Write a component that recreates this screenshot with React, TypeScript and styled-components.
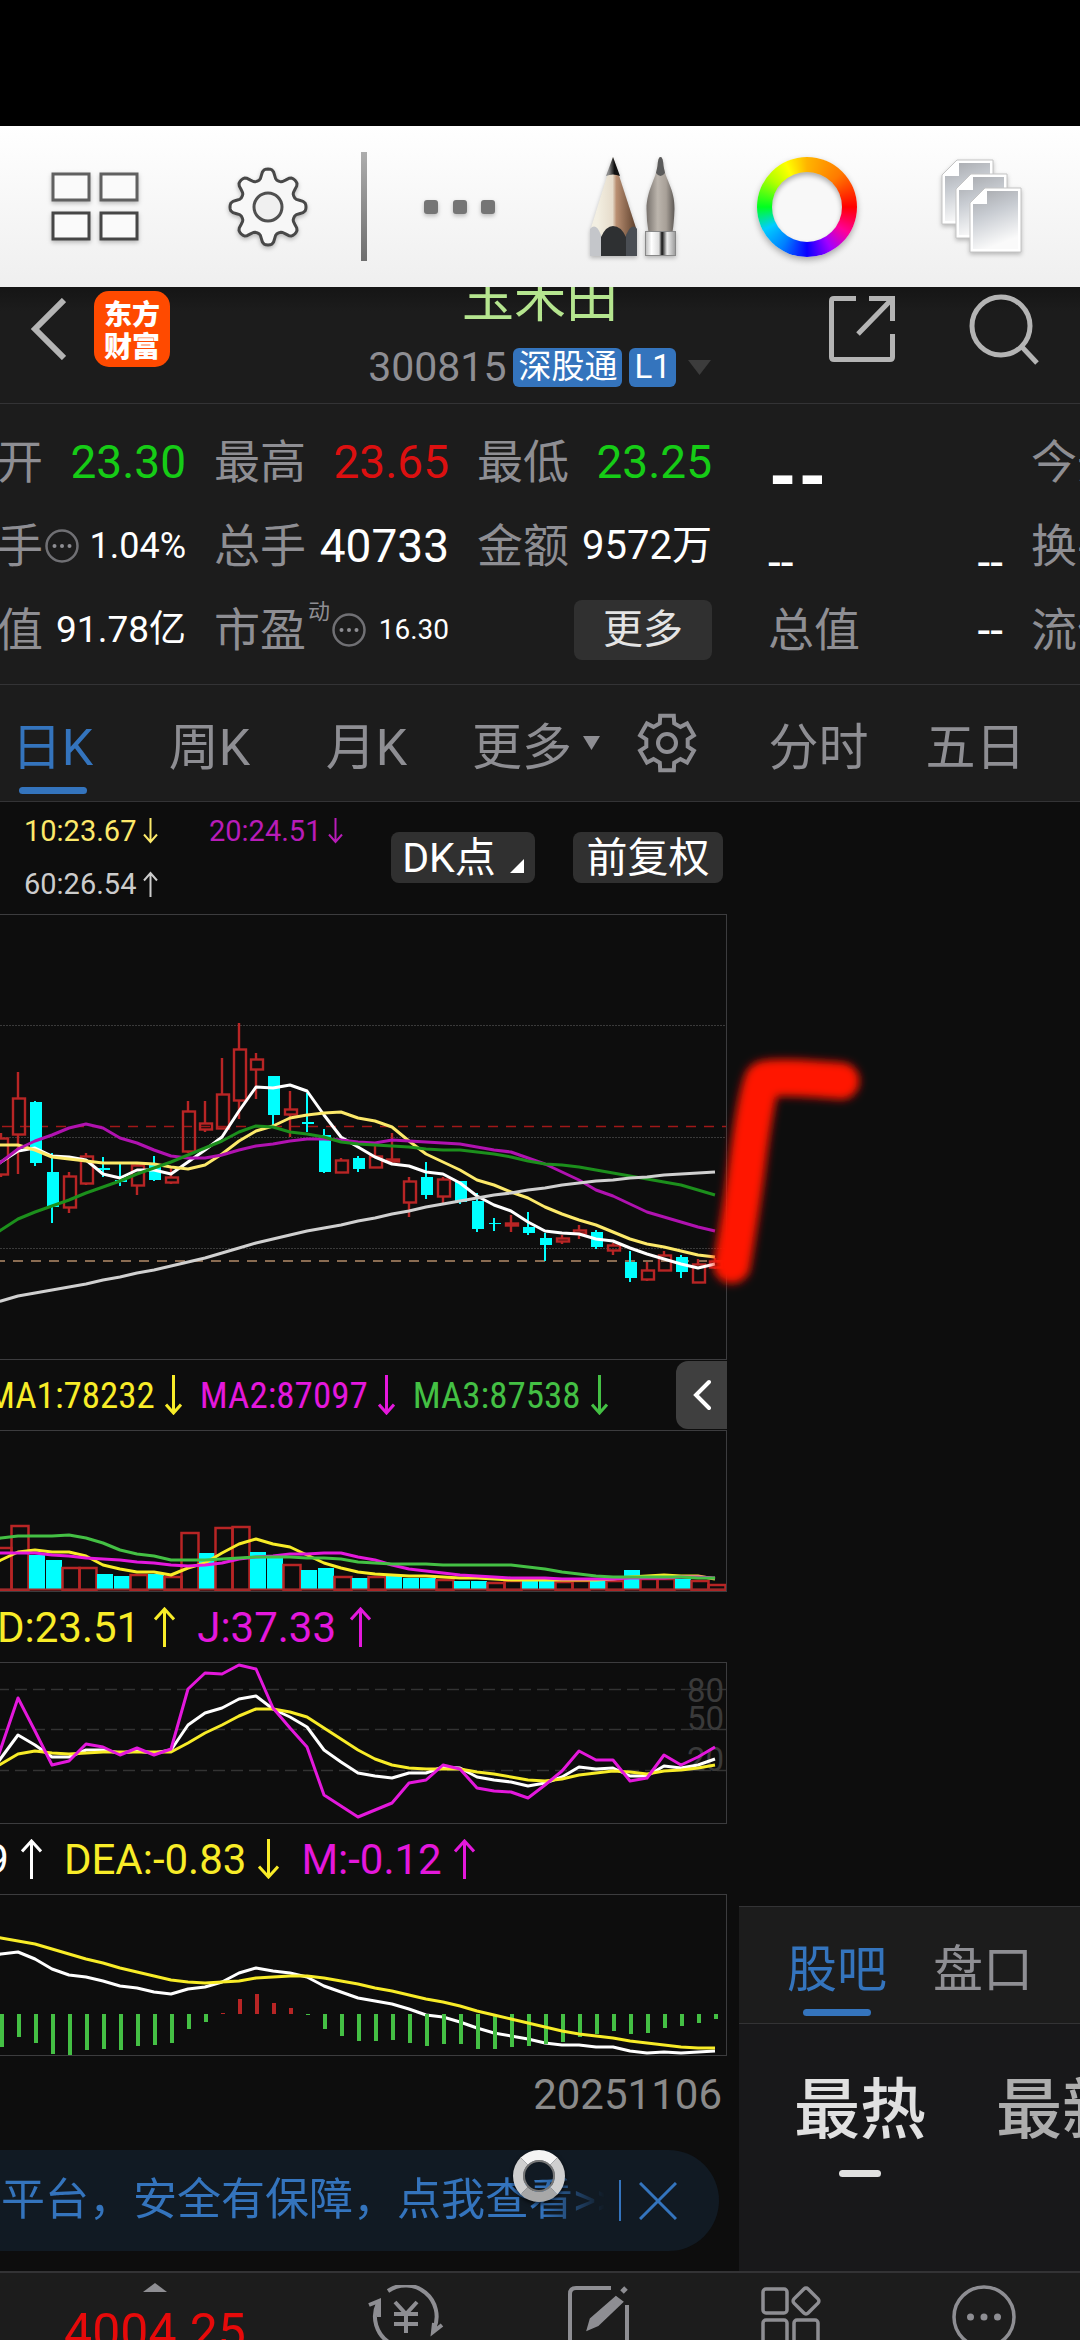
import React from "react";
import styled, { createGlobalStyle } from "styled-components";

/* ---------- palette ---------- */
const c = {
  panel: "#1c1c1c",
  page: "#0d0d0d",
  line: "#333335",
  grey: "#8e8e93",
  blue: "#3474bd",
  up: "#b82525",
  down: "#00ffff",
  yellow: "#f8ec28",
  magenta: "#e418dc",
  green: "#44c044",
};

const Global = createGlobalStyle`
  html, body { margin: 0; background: #000; }
  body { font-family: Roboto, "Noto Sans CJK SC", sans-serif; color: #fff; overflow: hidden; }
  *, *::before, *::after { box-sizing: border-box; }
  button { font: inherit; color: inherit; background: none; border: 0; padding: 0; margin: 0; }
  svg { display: block; flex: none; }
`;

/* ---------- shell ---------- */
const Shell = styled.div`
  position: relative;
  display: flex;
  flex-direction: column;
  height: 100vh;
  overflow: hidden;
  background: ${c.page};
`;
const StatusBar = styled.div`
  flex: none;
  height: 126px;
  background: #000;
`;

/* ---------- drawing toolbar ---------- */
const Toolbar = styled.div`
  flex: none;
  display: grid;
  grid-template-columns: 1fr 1fr 18px 1fr 1fr 1fr 1fr;
  align-items: center;
  justify-items: center;
  height: 161px;
  padding: 0 12px 0 8px;
  background: linear-gradient(#ffffff, #efefef);
`;
const ToolButton = styled.button`
  display: flex;
  align-items: center;
  justify-content: center;
  width: 120px;
  height: 120px;
`;
const ToolDivider = styled.span`
  width: 6px;
  height: 109px;
  background: linear-gradient(#adadad, #6e6e6e);
`;
const ColorRing = styled.span`
  display: grid;
  place-items: center;
  width: 100px;
  height: 100px;
  border-radius: 50%;
  box-shadow: 0 3px 6px rgba(0, 0, 0, 0.3);
  background: conic-gradient(
    #ffb400, #ff7a00 45deg, #ff0000 90deg, #ff0096 122deg, #a000ff 150deg, #0a00ff 180deg,
    #0080ff 212deg, #00ccff 242deg, #00ff20 270deg, #b4ff00 308deg, #ffff00 334deg, #ffb400 360deg
  );
`;
const RingHole = styled.span`
  width: 70px;
  height: 70px;
  border-radius: 50%;
  background: #f8f8f8;
  box-shadow: inset 0 3px 5px rgba(0, 0, 0, 0.3);
`;

/* ---------- header ---------- */
const Header = styled.header`
  flex: none;
  display: grid;
  grid-template-columns: 1fr auto 1fr;
  align-items: end;
  align-content: end;
  height: 117px;
  overflow: hidden;
  border-bottom: 1px solid ${c.line};
  background: linear-gradient(#151515, ${c.panel} 24px);
`;
const HeaderSide = styled.div<{ $end?: boolean }>`
  display: flex;
  align-items: center;
  justify-content: ${(p) => (p.$end ? "flex-end" : "flex-start")};
  gap: ${(p) => (p.$end ? 74 : 28)}px;
  height: 76px;
  margin-bottom: 36px;
  padding: ${(p) => (p.$end ? "0 40px 0 0" : "0 0 0 30px")};
`;
const BrandLogo = styled.div`
  display: flex;
  flex-direction: column;
  align-items: center;
  justify-content: center;
  width: 76px;
  height: 76px;
  border-radius: 15px;
  background: #ff4a00;
  font: 900 28px/32px "Noto Sans CJK SC", sans-serif;
`;
const TitleBlock = styled.div`
  display: flex;
  flex-direction: column;
  align-items: center;
  padding-bottom: 16px;
`;
const StockName = styled.h1`
  margin: 0 0 18px;
  font: 400 52px/68px "Noto Sans CJK SC", sans-serif;
  color: #b5e58f;
`;
const CodeLine = styled.div`
  display: flex;
  align-items: center;
  gap: 7px;
  height: 40px;
  font-size: 41px;
  color: ${c.grey};
`;
const Badge = styled.span`
  height: 39px;
  padding: 0 5px;
  border-radius: 6px;
  background: ${c.blue};
  color: #fff;
  font-size: 33px;
  line-height: 38px;
`;
const Caret = styled.svg`
  margin-left: 4px;
`;

/* ---------- swipe pager ---------- */
const Viewport = styled.main`
  flex: none;
  overflow: hidden;
`;
const Track = styled.div`
  display: flex;
  width: 100%;
  margin-left: -340px;
`;
const Page = styled.section`
  flex: 0 0 100%;
  display: flex;
  flex-direction: column;
  min-width: 0;
  border-bottom: 1px solid ${c.line};
`;

/* ---------- quote ---------- */
const Quote = styled.div`
  display: grid;
  grid-template-columns: repeat(4, 1fr);
  grid-auto-rows: 84px;
  column-gap: 28px;
  padding: 16px 28px 12px;
  background: ${c.panel};
  border-bottom: 1px solid ${c.line};
`;
const Cell = styled.div<{ $low?: boolean }>`
  display: flex;
  align-items: center;
  justify-content: space-between;
  min-width: 0;
  white-space: nowrap;
  line-height: 84px;
  padding-top: ${(p) => (p.$low ? 32 : 0)}px;
`;
const Label = styled.span`
  display: flex;
  align-items: center;
  gap: 2px;
  font-size: 46px;
  color: ${c.grey};
`;
const Sup = styled.sup`
  align-self: flex-start;
  height: 48px;
  font-size: 22px;
  line-height: 48px;
`;
const Value = styled.span<{ $size?: number; $tone?: string }>`
  font-size: ${(p) => p.$size ?? 46}px;
  color: ${(p) => p.$tone ?? "#fff"};
`;
const BigPrice = styled.span`
  font-size: 66px;
  font-weight: 900;
`;
const MoreButton = styled.button`
  width: 138px;
  height: 60px;
  margin-left: auto;
  border-radius: 8px;
  background: #303030;
  color: #e4e4e4;
  font-size: 40px;
  line-height: 60px;
`;

/* ---------- period tabs ---------- */
const Tabs = styled.nav`
  display: flex;
  height: 117px;
  background: ${c.panel};
  border-bottom: 1px solid ${c.line};
`;
const Tab = styled.button<{ $on?: boolean; $w?: number }>`
  flex: none;
  display: grid;
  grid-template-rows: 88px 7px;
  align-content: start;
  justify-content: center;
  justify-items: center;
  align-items: center;
  width: ${(p) => p.$w ?? 157}px;
  padding-top: 14px;
  font-size: 50px;
  white-space: nowrap;
  color: ${(p) => (p.$on ? c.blue : c.grey)};
  &::after {
    content: "";
    width: 68px;
    height: 7px;
    border-radius: 4px;
    background: ${(p) => (p.$on ? c.blue : "transparent")};
  }
`;
const MoreLabel = styled.span`
  display: flex;
  align-items: center;
  gap: 11px;
`;
const GearTab = styled(Tab)`
  margin-left: 10px;
`;

/* ---------- chart column ---------- */
const MaStrip = styled.div`
  display: flex;
  justify-content: space-between;
  height: 112px;
  padding: 2px 17px 0 364px;
`;
const MaGrid = styled.div`
  display: grid;
  grid-template-columns: 185px 180px;
  grid-auto-rows: 53px;
`;
const Indicator = styled.span<{ $tone: string; $size?: number; $gap?: number }>`
  display: flex;
  align-items: center;
  gap: ${(p) => p.$gap ?? 7}px;
  white-space: nowrap;
  font-size: ${(p) => p.$size ?? 29}px;
  color: ${(p) => p.$tone};
`;
const CondensedIndicator = styled(Indicator)`
  font-family: "Roboto Condensed", Roboto, sans-serif;
`;
const ChipRow = styled.div`
  display: flex;
  gap: 38px;
  padding-top: 28px;
`;
const Chip = styled.button<{ $w: number }>`
  display: flex;
  align-items: center;
  justify-content: center;
  gap: 14px;
  width: ${(p) => p.$w}px;
  height: 51px;
  border-radius: 8px;
  background: #303030;
  font-size: 41px;
  line-height: 50px;
`;
const Frame = styled.div`
  display: flex;
  justify-content: flex-end;
  margin-right: 13px;
  border: 1px solid #3c3c3e;
  overflow: hidden;
`;
const Legend = styled.div<{ $left: number; $gap: number }>`
  display: flex;
  align-items: center;
  gap: ${(p) => p.$gap}px;
  height: 70px;
  padding: 0 13px 0 ${(p) => p.$left}px;
`;
const CollapseButton = styled.button`
  display: grid;
  place-items: center;
  width: 51px;
  height: 68px;
  margin-left: auto;
  border-radius: 12px 0 0 12px;
  background: #3f3f3f;
`;
const DateRow = styled.div`
  height: 94px;
  padding-right: 18px;
  text-align: right;
  font-size: 42px;
  line-height: 78px;
  color: #8a8a8a;
`;
const Banner = styled.div`
  display: flex;
  align-items: center;
  height: 101px;
  margin: 0 21px 20px 0;
  padding-left: 341px;
  border-radius: 51px;
  background: #111a23;
  color: ${c.blue};
`;
const BannerLink = styled.a`
  flex: 1;
  overflow: hidden;
  white-space: nowrap;
  font-size: 44px;
  line-height: 101px;
  color: inherit;
  text-decoration: none;
  mask-image: linear-gradient(90deg, #000 540px, transparent 604px);
`;
const BannerClose = styled.button`
  display: flex;
  align-items: center;
  gap: 18px;
  margin-right: 42px;
  &::before {
    content: "";
    width: 2px;
    height: 41px;
    background: ${c.blue};
  }
`;

/* ---------- forum panel ---------- */
const Forum = styled.div`
  display: flex;
  flex-direction: column;
  height: 365px;
  margin: auto 0 0 -1px;
  border-top: 1px solid ${c.line};
  background: #18181a;
`;
const ForumTabs = styled.div`
  display: flex;
  gap: 46px;
  height: 117px;
  padding-left: 48px;
  background: ${c.panel};
  border-bottom: 1px solid ${c.line};
`;
const ForumTab = styled(Tab)`
  width: 100px;
`;
const SortTabs = styled.div`
  display: flex;
  gap: 70px;
  padding: 39px 0 0 55px;
`;
const SortTab = styled.button<{ $on?: boolean }>`
  flex: none;
  display: flex;
  flex-direction: column;
  align-items: center;
  font-size: 66px;
  font-weight: 500;
  line-height: 96px;
  color: ${(p) => (p.$on ? "#e0e0e0" : "#adadad")};
  &::after {
    content: "";
    width: 42px;
    height: 7px;
    margin-top: 11px;
    border-radius: 4px;
    background: ${(p) => (p.$on ? "#e0e0e0" : "transparent")};
  }
`;

/* ---------- bottom bar ---------- */
const BottomBar = styled.nav`
  flex: none;
  display: grid;
  grid-template-columns: 310px repeat(4, 1fr);
  justify-items: center;
  height: 130px;
  padding-top: 10px;
  border-top: 1px solid ${c.line};
  background: ${c.panel};
  color: ${c.grey};
`;
const IndexButton = styled.button`
  display: flex;
  flex-direction: column;
  align-items: center;
  font-size: 50px;
  line-height: 60px;
  color: #e60a0a;
  gap: 10px;
`;
const NavButton = styled.button`
  display: flex;
  align-items: flex-start;
  padding-top: 2px;
`;

/* ---------- things lying over the page ---------- */
const BrushStroke = styled.svg`
  position: absolute;
  left: 690px;
  top: 1030px;
  pointer-events: none;
`;
const Puck = styled.div`
  position: absolute;
  left: 513px;
  top: 2150px;
  width: 52px;
  height: 52px;
  border-radius: 50%;
  border: 10px solid #cfcfcf;
  border-top-color: #f4f4f4;
  border-bottom-color: #a8a8a8;
  box-shadow: inset 0 0 0 2px #777, 0 2px 4px rgba(0, 0, 0, 0.7);
`;

/* ---------- data ---------- */
const step = (i: number) => 1 + 17 * i;

// rising flag, high, body top, body bottom, low
const candles: number[][] = [
  [1,1133,1138,1174,1177],[1,1072,1098,1134,1174],[0,1101,1102,1163,1166],[0,1153,1172,1207,1223],
  [1,1172,1176,1207,1213],[1,1153,1156,1183,1185],[0,1157,1168,1170,1177],[0,1163,1180,1182,1186],
  [1,1163,1165,1185,1195],[0,1156,1165,1180,1181],[1,1168,1177,1182,1184],[1,1101,1111,1151,1153],
  [1,1101,1123,1129,1132],[1,1058,1094,1128,1129],[1,1023,1049,1100,1119],[1,1053,1059,1069,1099],
  [0,1076,1076,1115,1125],[1,1091,1109,1114,1137],[0,1093,1122,1124,1132],[0,1129,1135,1172,1173],
  [1,1158,1160,1172,1173],[0,1156,1158,1169,1172],[1,1146,1156,1167,1167],[1,1133,1159,1161,1164],
  [1,1177,1181,1202,1217],[0,1162,1177,1195,1199],[1,1177,1179,1196,1203],[0,1181,1181,1202,1204],
  [0,1193,1201,1229,1232],[0,1218,1223,1224,1231],[1,1215,1223,1225,1232],[0,1212,1227,1233,1235],
  [0,1233,1238,1245,1261],[1,1235,1238,1241,1244],[1,1225,1230,1233,1239],[0,1230,1232,1247,1249],
  [1,1243,1245,1250,1255],[0,1251,1262,1278,1282],[1,1262,1270,1279,1281],[1,1251,1255,1270,1271],
  [0,1255,1257,1272,1278],[1,1259,1264,1282,1283],[1,1258,1261,1267,1269],
];
const ma5 = [1162,1151,1148,1156,1157,1160,1174,1178,1170,1170,1174,1162,1150,1137,1111,1087,1088,1085,1091,1115,1137,1147,1157,1164,1166,1172,1174,1183,1196,1205,1211,1222,1231,1233,1234,1239,1241,1248,1254,1259,1264,1268,1264];
const ma10 = [1145,1145,1150,1157,1159,1161,1163,1163,1163,1164,1167,1169,1165,1154,1141,1131,1126,1118,1115,1113,1112,1118,1121,1127,1141,1154,1162,1170,1180,1185,1192,1198,1207,1214,1220,1225,1232,1239,1244,1247,1251,1255,1257];
const ma20 = [1162,1149,1141,1135,1128,1124,1128,1138,1143,1150,1156,1158,1158,1155,1150,1146,1144,1141,1139,1139,1140,1142,1143,1140,1141,1142,1143,1144,1147,1150,1152,1158,1164,1172,1180,1190,1196,1204,1212,1217,1222,1227,1231];
const ma30 = [1230,1219,1212,1206,1200,1193,1187,1181,1174,1168,1162,1155,1148,1141,1132,1126,1127,1132,1134,1137,1142,1144,1145,1146,1147,1149,1150,1150,1152,1154,1157,1161,1164,1165,1167,1170,1173,1176,1179,1182,1185,1190,1195];
const ma60 = [1301,1296,1293,1290,1287,1284,1280,1277,1273,1270,1266,1262,1258,1253,1248,1243,1239,1235,1231,1228,1225,1221,1218,1214,1211,1207,1204,1201,1198,1195,1193,1190,1188,1185,1183,1181,1180,1178,1177,1175,1174,1173,1172];

// rising flag, bar top
const volumes: number[][] = [
  [1,1548],[1,1526],[0,1555],[0,1560],[1,1568],[1,1568],[0,1574],[0,1576],[1,1575],[0,1574],[1,1577],
  [1,1533],[0,1553],[1,1528],[1,1527],[0,1552],[0,1558],[1,1565],[0,1570],[0,1568],[1,1577],[0,1578],
  [1,1577],[0,1576],[0,1578],[0,1578],[1,1580],[0,1581],[0,1581],[1,1583],[1,1581],[0,1581],[0,1581],
  [1,1582],[1,1581],[0,1581],[1,1581],[0,1570],[1,1579],[1,1579],[0,1579],[1,1581],[1,1585],
];
const vol1 = [1560,1552,1550,1552,1552,1556,1565,1569,1572,1572,1575,1568,1563,1553,1544,1539,1544,1547,1555,1563,1568,1572,1574,1575,1576,1576,1577,1578,1578,1579,1580,1580,1580,1580,1580,1580,1579,1577,1576,1575,1576,1576,1579];
const vol2 = [1553,1553,1553,1555,1556,1558,1559,1560,1562,1563,1565,1566,1565,1563,1559,1557,1556,1554,1554,1553,1553,1557,1560,1565,1569,1571,1573,1575,1576,1577,1578,1578,1578,1579,1579,1579,1579,1578,1578,1578,1577,1577,1578];
const vol3 = [1538,1536,1536,1536,1535,1538,1543,1550,1554,1556,1560,1560,1560,1559,1558,1557,1557,1557,1558,1558,1559,1562,1563,1564,1564,1564,1565,1565,1565,1565,1565,1567,1569,1572,1574,1576,1577,1577,1577,1577,1577,1578,1578];

const kdjJ = [1748,1698,1731,1765,1761,1744,1747,1755,1748,1755,1749,1689,1673,1674,1665,1669,1708,1728,1747,1795,1806,1817,1810,1803,1783,1780,1765,1769,1788,1791,1792,1798,1785,1771,1751,1760,1760,1781,1778,1755,1765,1757,1747];
const kdjK = [1758,1735,1745,1757,1757,1750,1750,1753,1751,1753,1750,1725,1713,1708,1699,1696,1709,1717,1727,1750,1762,1773,1776,1778,1773,1773,1767,1768,1777,1780,1782,1786,1783,1777,1767,1769,1768,1776,1776,1766,1768,1765,1759];
const kdjD = [1764,1754,1751,1753,1754,1753,1752,1752,1752,1752,1752,1743,1733,1725,1716,1709,1709,1712,1717,1728,1739,1750,1759,1765,1768,1769,1769,1769,1772,1774,1777,1780,1781,1779,1775,1773,1771,1772,1774,1771,1770,1768,1765];

const macd = [33,23,29,40,41,36,35,36,32,31,29,15,8,-1,-15,-20,-11,-6,1,15,22,27,27,26,29,32,30,30,35,35,33,32,30,28,23,20,17,20,19,14,12,9,5];
const dif = [1954,1952,1959,1969,1975,1977,1981,1986,1988,1992,1994,1989,1987,1982,1973,1968,1971,1973,1977,1986,1992,1998,2001,2004,2009,2015,2017,2022,2028,2033,2036,2039,2043,2045,2045,2047,2047,2051,2053,2052,2053,2052,2051];
const dea = [1938,1941,1944,1949,1954,1959,1963,1968,1972,1976,1980,1982,1983,1982,1981,1978,1977,1976,1976,1978,1981,1984,1988,1991,1995,1999,2002,2006,2011,2015,2019,2023,2027,2031,2034,2036,2038,2041,2043,2045,2047,2048,2048];

/* ---------- drawings ---------- */
const Curve = ({ ys, color }: { ys: number[]; color: string }) => (
  <polyline
    points={`-16,${2 * ys[0] - ys[1]} ` + ys.map((y, i) => `${step(i)},${y}`).join(" ")}
    fill="none" stroke={color} strokeWidth="3" strokeLinejoin="round"
  />
);

const KLineChart = () => (
  <svg width="726" height="444" viewBox="0 915 726 444">
    {[1025, 1137, 1248].map((y) => (
      <path key={y} d={`M0 ${y + 0.5}H726`} stroke="#3a3a3a" strokeDasharray="2 1" />
    ))}
    <path d="M2 1126.5H726" stroke="#a01818" strokeWidth="1.4" strokeDasharray="10 8" />
    <path d="M-5 1261H726" stroke="#8a6c52" strokeWidth="2" strokeDasharray="10 8" />
    {candles.map(([up, hi, top, bottom, lo], i) => {
      const x = step(i);
      return up ? (
        <g key={i} stroke={c.up} fill="none" strokeWidth="2.4">
          <path d={`M${x} ${hi}V${top}M${x} ${bottom}V${lo}`} />
          <rect x={x - 5} y={top + 0.5} width="12" height={bottom - top} />
        </g>
      ) : (
        <g key={i} fill={c.down}>
          <rect x={x - 1} y={hi} width="2" height={lo - hi} />
          <rect x={x - 5} y={top} width="12" height={bottom - top} />
        </g>
      );
    })}
    <Curve ys={ma5} color="#ffffff" />
    <Curve ys={ma10} color="#fce96a" />
    <Curve ys={ma20} color="#b012b0" />
    <Curve ys={ma30} color="#1c8f1c" />
    <Curve ys={ma60} color="#d0d0d0" />
  </svg>
);

const VolumeChart = () => (
  <svg width="726" height="160" viewBox="0 1431 726 160">
    {volumes.map(([up, top], i) => {
      const x = step(i) - 7;
      return up ? (
        <rect key={i} x={x + 0.5} y={top} width="17" height={1590 - top} fill="none" stroke={c.up} strokeWidth="2.5" />
      ) : (
        <rect key={i} x={x + 1} y={top} width="16" height={1590 - top} fill={c.down} />
      );
    })}
    <path d="M0 1589.5H726" stroke="#a02a2a" strokeWidth="2" />
    <Curve ys={vol1} color={c.yellow} />
    <Curve ys={vol2} color={c.magenta} />
    <Curve ys={vol3} color={c.green} />
  </svg>
);

const AxisText = styled.text`
  font-size: 33px;
  fill: #3a3a3a;
  text-anchor: end;
`;
const KdjChart = () => (
  <svg width="726" height="160" viewBox="0 1663 726 160">
    {[1689, 1729, 1770].map((y) => (
      <path key={y} d={`M-3 ${y + 0.5}H726`} stroke="#333" strokeWidth="1.5" strokeDasharray="12 6" />
    ))}
    <AxisText x="724" y="1702">80</AxisText>
    <AxisText x="724" y="1730">50</AxisText>
    <AxisText x="724" y="1771">20</AxisText>
    <Curve ys={kdjK} color="#ffffff" />
    <Curve ys={kdjD} color={c.yellow} />
    <Curve ys={kdjJ} color={c.magenta} />
  </svg>
);

const MacdChart = () => (
  <svg width="726" height="160" viewBox="0 1895 726 160">
    <Curve ys={dif} color="#ffffff" />
    {macd.map((h, i) => (
      <rect key={i} x={step(i) - 1} y={h > 0 ? 2014 : 2014 + h} width="4" height={Math.abs(h)} fill={h > 0 ? c.green : c.up} />
    ))}
    <Curve ys={dea} color={c.yellow} />
  </svg>
);

const Arrow = ({ up, h = 40, w = 21 }: { up?: boolean; h?: number; w?: number }) => (
  <svg width={w} height={h} viewBox={`0 0 ${w} ${h}`} fill="none" stroke="currentColor" strokeWidth={h > 30 ? 3 : 2}>
    <path
      d={
        up
          ? `M${w / 2} ${h}V2M1 ${w / 2 + 2}L${w / 2} 2L${w - 1} ${w / 2 + 2}`
          : `M${w / 2} 0V${h - 2}M1 ${h - w / 2 - 2}L${w / 2} ${h - 2}L${w - 1} ${h - w / 2 - 2}`
      }
    />
  </svg>
);

const DotsCircle = () => (
  <svg width="34" height="34" viewBox="0 0 34 34" fill={c.grey}>
    <circle cx="17" cy="17" r="15.5" fill="none" stroke="#707074" strokeWidth="2.5" />
    <circle cx="9.5" cy="17" r="2" /><circle cx="17" cy="17" r="2" /><circle cx="24.5" cy="17" r="2" />
  </svg>
);

const hexGear = (() => {
  const pts: string[] = [];
  for (let t = 0; t < 6; t++) {
    for (const [a, r] of [[-20, 21], [-14, 28], [14, 28], [20, 21]]) {
      const rad = ((t * 60 + a - 90) * Math.PI) / 180;
      pts.push(`${(30 + r * Math.cos(rad)).toFixed(1)},${(30 + r * Math.sin(rad)).toFixed(1)}`);
    }
  }
  return pts.join(" ");
})();

const octGear = (() => {
  const pts: string[] = [];
  for (let d = 0; d < 360; d += 3) {
    const wave = Math.tanh(1.6 * Math.cos((8 * d * Math.PI) / 180)) / Math.tanh(1.6);
    const r = 33 + 5 * wave;
    const rad = (d * Math.PI) / 180;
    pts.push(`${(42 + r * Math.cos(rad)).toFixed(1)},${(42 + r * Math.sin(rad)).toFixed(1)}`);
  }
  return pts.join(" ");
})();

const shade = { filter: "drop-shadow(0 2px 2px rgba(0,0,0,.25))" };
const Shaded = styled.svg`
  filter: ${shade.filter};
`;

const SheetsIcon = () => (
  <Shaded width="84" height="98" viewBox="939 160 84 98">
    <defs>
      <linearGradient id="sheet" x1="0" y1="0" x2="0.3" y2="1">
        <stop offset="0" stopColor="#a6a8ac" /><stop offset="0.45" stopColor="#c8ccd2" /><stop offset="1" stopColor="#fafafa" />
      </linearGradient>
    </defs>
    {[[942, 162], [956, 176], [970, 190]].map(([x, y]) => (
      <g key={x}>
        <path d={`M${x + 15} ${y}h36v64h-51v-49z`} fill="#fff" stroke="#c4c4c4" />
        <path d={`M${x + 17} ${y + 3}h31v58h-45v-45h14z`} fill="url(#sheet)" />
      </g>
    ))}
  </Shaded>
);

const PencilBrushIcon = () => (
  <Shaded width="90" height="102" viewBox="588 157 90 102">
    <defs>
      <linearGradient id="wood"><stop offset="0.15" stopColor="#f3efe2" /><stop offset="0.48" stopColor="#e6dccb" /><stop offset="0.56" stopColor="#b98f72" /><stop offset="1" stopColor="#5a3d2a" /></linearGradient>
      <linearGradient id="lead"><stop offset="0.2" stopColor="#8a8a8a" /><stop offset="0.6" stopColor="#111" /></linearGradient>
      <linearGradient id="hair"><stop offset="0" stopColor="#77716c" /><stop offset="0.4" stopColor="#bcb5ad" /><stop offset="0.7" stopColor="#a8a098" /><stop offset="1" stopColor="#5e5955" /></linearGradient>
      <linearGradient id="metal"><stop offset="0" stopColor="#bbb" /><stop offset="0.2" stopColor="#fff" /><stop offset="0.45" stopColor="#ddd" /><stop offset="0.55" stopColor="#111" /><stop offset="0.72" stopColor="#eee" /><stop offset="1" stopColor="#999" /></linearGradient>
    </defs>
    <path d="M612 158L589 232V240H636V232Z" fill="url(#wood)" />
    <path d="M612 158L605 177Q612 174 619 177Z" fill="url(#lead)" />
    <path d="M589 230Q595 223 600 236V257H589Z" fill="#c4c6ca" />
    <path d="M600 238Q605 227 612 227Q620 227 625 238V257H600Z" fill="#2e3032" />
    <path d="M625 236Q631 223 636 230V257H625Z" fill="#4a4e54" />
    <path d="M659.5 158Q662 158 662.5 167C664 180 674 190 673.5 210Q673 224 671.5 233H647.500Q645.500 222 645.5 210C646 190 655 180 656.5 167Q657 158 659.5 158Z" fill="url(#hair)" />
    <path d="M659.5 158Q662 158 662.5 167L664 174Q659.5 180 655 174L656.5 167Q657 158 659.5 158Z" fill="#5b5b5b" />
    <rect x="644.5" y="232.5" width="30" height="24" fill="url(#metal)" stroke="#888" />
  </Shaded>
);

const Tools = () => (
  <Toolbar>
    <ToolButton aria-label="Gallery">
      <Shaded width="88" height="70" viewBox="0 0 88 70" fill="#fafafa" strokeWidth="3">
        <g stroke="#606060"><path d="M2 2h36v26H2zM50 2h36v26H50z" /></g>
        <g stroke="#464646"><path d="M2 41h36v26H2zM50 41h36v26H50z" /></g>
      </Shaded>
    </ToolButton>
    <ToolButton aria-label="Settings">
      <Shaded width="84" height="84" viewBox="0 0 84 84">
        <polygon points={octGear} fill="#f7f7f7" stroke="#484848" strokeWidth="3" strokeLinejoin="round" />
        <circle cx="42" cy="42" r="14" fill="#f0f0f0" stroke="#505050" strokeWidth="3" />
      </Shaded>
    </ToolButton>
    <ToolDivider />
    <ToolButton aria-label="More tools">
      <Shaded width="72" height="16" viewBox="0 0 72 16" fill="#757575">
        <rect x="0" y="1" width="14" height="14" rx="3" /><rect x="29" y="1" width="14" height="14" rx="3" /><rect x="57" y="1" width="14" height="14" rx="3" />
      </Shaded>
    </ToolButton>
    <ToolButton aria-label="Brushes"><PencilBrushIcon /></ToolButton>
    <ToolButton aria-label="Color"><ColorRing><RingHole /></ColorRing></ToolButton>
    <ToolButton aria-label="Layers"><SheetsIcon /></ToolButton>
  </Toolbar>
);

const TopBar = () => (
  <Header>
    <HeaderSide>
      <button aria-label="Back">
        <svg width="36" height="62" viewBox="0 0 36 62" fill="none" stroke="#b4b4b4" strokeWidth="6"><path d="M34 2L5 31L34 60" /></svg>
      </button>
      <BrandLogo><span>东方</span><span>财富</span></BrandLogo>
    </HeaderSide>
    <TitleBlock>
      <StockName>玉禾田</StockName>
      <CodeLine>
        <span>300815</span><Badge>深股通</Badge><Badge>L1</Badge>
        <Caret width="25" height="17" viewBox="0 0 25 17"><path d="M1 1h23L12.5 16z" fill="#3c3c3c" /></Caret>
      </CodeLine>
    </TitleBlock>
    <HeaderSide $end>
      <button aria-label="Share">
        <svg width="66" height="66" viewBox="0 0 66 66" fill="none" stroke="#b4b4b4" strokeWidth="5">
          <path d="M27 2.5H5Q2.5 2.5 2.5 5V61Q2.5 63.5 5 63.5H61Q63.5 63.5 63.5 61V38M40 2.5H63.5V25M63 3L29 38" />
        </svg>
      </button>
      <button aria-label="Search">
        <svg width="71" height="72" viewBox="0 0 71 72" fill="none" stroke="#b4b4b4" strokeWidth="5">
          <circle cx="32" cy="33" r="29" /><path d="M53 54L68 70" />
        </svg>
      </button>
    </HeaderSide>
  </Header>
);

const KPage = () => (
  <Page>
    <Quote>
      <Cell />
      <Cell><Label>今开</Label><Value $tone="#16cc16">23.30</Value></Cell>
      <Cell><Label>最高</Label><Value $tone="#dc1010">23.65</Value></Cell>
      <Cell><Label>最低</Label><Value $tone="#16cc16">23.25</Value></Cell>
      <Cell />
      <Cell><Label>换手<DotsCircle /></Label><Value $size={36}>1.04%</Value></Cell>
      <Cell><Label>总手</Label><Value>40733</Value></Cell>
      <Cell><Label>金额</Label><Value $size={40}>9572万</Value></Cell>
      <Cell />
      <Cell><Label>流值</Label><Value $size={37}>91.78亿</Value></Cell>
      <Cell><Label>市盈<Sup>动</Sup><DotsCircle /></Label><Value $size={28}>16.30</Value></Cell>
      <Cell><MoreButton>更多</MoreButton></Cell>
    </Quote>
    <Tabs>
      <Tab $w={314} aria-hidden />
      <Tab $on>日K</Tab>
      <Tab>周K</Tab>
      <Tab>月K</Tab>
      <Tab $w={182}>
        <MoreLabel>更多<svg width="17" height="14" viewBox="0 0 17 14"><path d="M0 0h17L8.5 14z" fill={c.grey} /></svg></MoreLabel>
      </Tab>
      <GearTab $w={60} aria-label="Chart settings">
        <svg width="60" height="60" viewBox="0 0 60 60" fill="none" stroke={c.grey} strokeWidth="4">
          <polygon points={hexGear} /><circle cx="30" cy="30" r="9" />
        </svg>
      </GearTab>
    </Tabs>
    <MaStrip>
      <MaGrid>
        <Indicator $tone="#fce96a">10:23.67<Arrow h={26} w={15} /></Indicator>
        <Indicator $tone="#b81cb8">20:24.51<Arrow h={26} w={15} /></Indicator>
        <Indicator $tone="#cccccc">60:26.54<Arrow up h={26} w={15} /></Indicator>
      </MaGrid>
      <ChipRow>
        <Chip $w={144}>DK点<svg width="14" height="34" viewBox="0 0 14 34"><path d="M14 18V32H0z" fill="#fff" /></svg></Chip>
        <Chip $w={150}>前复权</Chip>
      </ChipRow>
    </MaStrip>
    <Frame><KLineChart /></Frame>
    <Legend $left={327} $gap={18}>
      <CondensedIndicator $tone={c.yellow} $size={37} $gap={10}>MA1:78232<Arrow w={17} /></CondensedIndicator>
      <CondensedIndicator $tone={c.magenta} $size={37} $gap={10}>MA2:87097<Arrow w={17} /></CondensedIndicator>
      <CondensedIndicator $tone={c.green} $size={37} $gap={10}>MA3:87538<Arrow w={17} /></CondensedIndicator>
      <CollapseButton aria-label="Collapse">
        <svg width="18" height="32" viewBox="0 0 18 32" fill="none" stroke="#fff" strokeWidth="4" strokeLinecap="round"><path d="M16 3L3 16L16 29" /></svg>
      </CollapseButton>
    </Legend>
    <Frame><VolumeChart /></Frame>
    <Legend $left={337} $gap={22}>
      <Indicator $tone={c.yellow} $size={42} $gap={14}>D:23.51<Arrow up /></Indicator>
      <Indicator $tone={c.magenta} $size={42} $gap={14}>J:37.33<Arrow up /></Indicator>
    </Legend>
    <Frame><KdjChart /></Frame>
    <Legend $left={183} $gap={22}>
      <Indicator $tone="#fff" $size={42} $gap={12}>DIF:-0.89<Arrow up /></Indicator>
      <Indicator $tone={c.yellow} $size={42} $gap={12}>DEA:-0.83<Arrow /></Indicator>
      <Indicator $tone={c.magenta} $size={42} $gap={12}>M:-0.12<Arrow up /></Indicator>
    </Legend>
    <Frame><MacdChart /></Frame>
    <DateRow>20251106</DateRow>
    <Banner>
      <BannerLink href="#">平台，安全有保障，点我查看&gt;&gt;</BannerLink>
      <BannerClose aria-label="Close">
        <svg width="38" height="38" viewBox="0 0 38 38" stroke={c.blue} strokeWidth="3"><path d="M1 1L37 37M37 1L1 37" /></svg>
      </BannerClose>
    </Banner>
  </Page>
);

const ForumPage = () => (
  <Page>
    <Quote>
      <Cell $low><BigPrice>--</BigPrice></Cell>
      <Cell><Label>今开</Label></Cell>
      <Cell /><Cell />
      <Cell $low><Value>--</Value><Value>--</Value></Cell>
      <Cell><Label>换手</Label></Cell>
      <Cell /><Cell />
      <Cell><Label>总值</Label><Value>--</Value></Cell>
      <Cell><Label>流值</Label></Cell>
    </Quote>
    <Tabs><Tab>分时</Tab><Tab>五日</Tab></Tabs>
    <Forum>
      <ForumTabs><ForumTab $on>股吧</ForumTab><ForumTab>盘口</ForumTab></ForumTabs>
      <SortTabs><SortTab $on>最热</SortTab><SortTab>最新</SortTab></SortTabs>
    </Forum>
  </Page>
);

const Footer = () => (
  <BottomBar>
    <IndexButton>
      <svg width="24" height="9" viewBox="0 0 24 9"><path d="M0 9L12 0L24 9z" fill={c.grey} /></svg>
      4004.25
    </IndexButton>
    <NavButton aria-label="Trade">
      <svg width="76" height="72" viewBox="368 2286 76 72" fill="none" stroke={c.grey} strokeWidth="4">
        <path d="M388 2292A31 31 0 0 1 434 2330M434 2330L433 2333M442 2326L433 2333L434 2324" />
        <path d="M369 2306L379 2302V2318M378 2304A31 31 0 0 0 390 2344" />
        <path d="M395 2303L406 2315L417 2303M406 2315V2334M394 2315H418M394 2325H418" />
      </svg>
    </NavButton>
    <NavButton aria-label="Note">
      <svg width="62" height="64" viewBox="568 2286 62 64" fill="none" stroke={c.grey} strokeWidth="4">
        <path d="M611 2289H576Q570 2289 570 2295V2346H627V2306" />
        <path d="M616 2300L620 2303L597 2325L590 2328L592 2321ZM622 2293L626 2289" strokeWidth="5" fill={c.grey} />
      </svg>
    </NavButton>
    <NavButton aria-label="Functions">
      <svg width="60" height="62" viewBox="761 2286 60 62" fill="none" stroke={c.grey} strokeWidth="3.5">
        <rect x="763" y="2290" width="24" height="24" rx="3" /><rect x="763" y="2321" width="24" height="24" rx="3" /><rect x="794" y="2321" width="24" height="24" rx="3" />
        <rect x="796" y="2292" width="20" height="20" rx="3" transform="rotate(45 806 2302)" />
      </svg>
    </NavButton>
    <NavButton aria-label="More">
      <svg width="64" height="64" viewBox="0 0 64 64" fill={c.grey}>
        <circle cx="32" cy="32" r="30" fill="none" stroke={c.grey} strokeWidth="3.5" />
        <circle cx="18.5" cy="32" r="3.5" /><circle cx="32" cy="32" r="3.5" /><circle cx="45.5" cy="32" r="3.5" />
      </svg>
    </NavButton>
  </BottomBar>
);

export default function App() {
  return (
    <Shell>
      <Global />
      <StatusBar />
      <Tools />
      <TopBar />
      <Viewport>
        <Track>
          <KPage />
          <ForumPage />
        </Track>
      </Viewport>
      <Footer />
      <BrushStroke width="200" height="280" viewBox="690 1030 200 280">
        <defs><filter id="soft" x="-30%" y="-30%" width="160%" height="160%"><feGaussianBlur stdDeviation="4" /></filter></defs>
        <path d="M732 1265Q743 1200 749 1150Q757 1092 763 1080Q770 1075 841 1081" fill="none" stroke="#ff1600" strokeWidth="37" strokeLinecap="round" strokeLinejoin="round" filter="url(#soft)" />
      </BrushStroke>
      <Puck />
    </Shell>
  );
}
